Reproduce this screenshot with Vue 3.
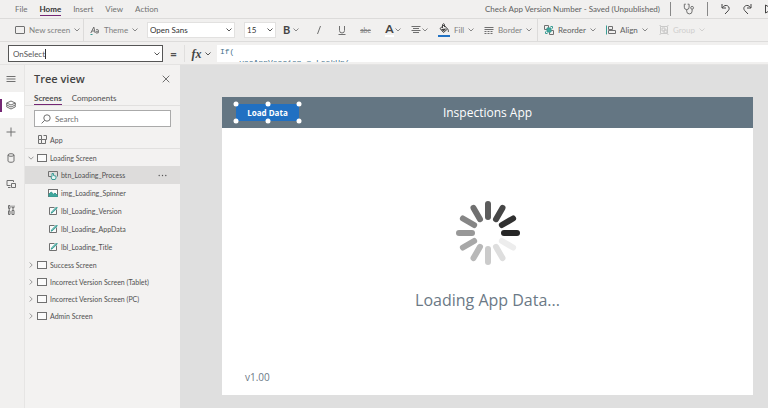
<script setup>
import { ref } from 'vue'

const menus = ['File', 'Home', 'Insert', 'View', 'Action']
const activeMenu = ref('Home')
const property = ref('OnSelect')
const font = ref('Open Sans')
const size = ref('15')
const search = ref('')
const selected = ref('btn_Loading_Process')
const formula = ref('If(\n    varAppVersion = LookUp(')

const controls = [
  { name: 'btn_Loading_Process', icon: 'button' },
  { name: 'img_Loading_Spinner', icon: 'image' },
  { name: 'lbl_Loading_Version', icon: 'label' },
  { name: 'lbl_Loading_AppData', icon: 'label' },
  { name: 'lbl_Loading_Title', icon: 'label' }
]
const otherScreens = [
  'Success Screen',
  'Incorrect Version Screen (Tablet)',
  'Incorrect Version Screen (PC)',
  'Admin Screen'
]
const spokes = [
  '#262626', '#ededed', '#dedede', '#cbcbcb', '#b8b8b8', '#a8a8a8',
  '#989898', '#868686', '#707070', '#5c5c5c', '#464646', '#303030'
]
const handles = ['tl', 'tc', 'tr', 'bl', 'bc', 'br']
</script>

<template>
  <div class="studio">
    <header class="titlebar">
      <nav class="menus" aria-label="Main menu">
        <button
          v-for="m in menus"
          :key="m"
          type="button"
          class="menu"
          :class="{ active: m === activeMenu }"
          @click="activeMenu = m"
        >{{ m }}</button>
      </nav>
      <span class="doc">Check App Version Number - Saved (Unpublished)</span>
      <div class="actions">
        <button type="button" class="act ruled" aria-label="App checker">
          <svg width="12" height="12" viewBox="0 0 12 12">
            <path d="M2.8 1.2H1.3v3a2.4 2.4 0 0 0 4.8 0v-3H4.6M3.7 6.6v1.6a2.7 2.7 0 0 0 5.4 0V6.2" />
            <circle cx="9.1" cy="4.8" r="1.4" />
          </svg>
        </button>
        <button type="button" class="act" aria-label="Undo">
          <svg width="11" height="12" viewBox="0 0 11 12">
            <path class="bold" d="M2 1v4h4M2.2 4.8C4 2.4 6 2 7.5 2.8c2.2 1.2 2 3.6.6 5L5 11" />
          </svg>
        </button>
        <button type="button" class="act" aria-label="Redo">
          <svg width="11" height="12" viewBox="0 0 11 12">
            <path class="bold" d="M9 1v4H5M8.8 4.8C7 2.4 5 2 3.5 2.8c-2.2 1.2-2 3.6-.6 5L6 11" />
          </svg>
        </button>
        <button type="button" class="act" aria-label="Preview">
          <svg width="10" height="12" viewBox="0 0 10 12"><path class="bold" d="M1.5 2v8l7-4z" /></svg>
        </button>
      </div>
    </header>

    <div class="toolbar" role="toolbar" aria-label="Formatting">
      <button type="button" class="tool first ruled">
        <svg width="10" height="10" viewBox="0 0 10 10"><rect x=".5" y="1.5" width="9" height="7" rx=".5" /></svg>
        <span>New screen</span>
        <svg class="chev" width="6" height="4" viewBox="0 0 6 4"><path d="M.5.5 3 3 5.5.5" /></svg>
      </button>
      <button type="button" class="tool">
        <svg width="10" height="10" viewBox="0 0 10 10">
          <path d="M.8 8 3.8 2l1.400 6M2 6h3" />
          <path d="M6 5c1-1 2.500-.5 2.500.5L8 8.200M8.300 6.200C6.500 6 5.700 6.800 6 7.600c.5.9 1.800.5 2.200-.2" />
          <path class="teal" d="M.5 9.500h2" />
        </svg>
        <span>Theme</span>
        <svg class="chev" width="6" height="4" viewBox="0 0 6 4"><path d="M.5.5 3 3 5.5.5" /></svg>
      </button>
      <div class="pick family">
        <select v-model="font" aria-label="Font"><option>Open Sans</option><option>Lato</option></select>
        <svg class="chev dark" width="6" height="4" viewBox="0 0 6 4"><path d="M.5.5 3 3 5.5.5" /></svg>
      </div>
      <div class="pick">
        <select v-model="size" aria-label="Font size"><option>15</option><option>18</option></select>
        <svg class="chev dark" width="6" height="4" viewBox="0 0 6 4"><path d="M.5.5 3 3 5.5.5" /></svg>
      </div>
      <button type="button" class="glyph" aria-label="Font weight">
        <b>B</b>
        <svg class="chev" width="6" height="4" viewBox="0 0 6 4"><path d="M.5.5 3 3 5.5.5" /></svg>
      </button>
      <button type="button" class="glyph" aria-label="Italic">
        <svg width="6" height="10" viewBox="0 0 6 10"><path d="M4.5 1 1.5 9" /></svg>
      </button>
      <button type="button" class="glyph" aria-label="Underline">
        <svg width="8" height="11" viewBox="0 0 8 11"><path d="M1.5 1v4.500a2.500 2.500 0 0 0 5 0V1M.5 9.500h7" /></svg>
      </button>
      <button type="button" class="glyph strike" aria-label="Strikethrough"><s>abc</s></button>
      <button type="button" class="glyph tight" aria-label="Font colour">
        <span class="fontcolor">A</span>
        <svg class="chev" width="6" height="4" viewBox="0 0 6 4"><path d="M.5.5 3 3 5.5.5" /></svg>
      </button>
      <button type="button" class="glyph tight" aria-label="Text alignment">
        <svg width="10" height="10" viewBox="0 0 10 10"><path d="M.5 1.500h9M2 3.500h6M.5 5.500h9M2 7.500h6" /></svg>
        <svg class="chev" width="6" height="4" viewBox="0 0 6 4"><path d="M.5.5 3 3 5.5.5" /></svg>
      </button>
      <button type="button" class="tool">
        <svg width="12" height="14" viewBox="0 0 12 14">
          <path class="bold" d="M2 5.500 6 2l3.500 4L5.500 9.500zM4.500 5V1.500c.8-1.300 2-.8 2 .2V4M9.500 6c1 .8 1 2 .8 3" />
          <path class="ink" d="m3 6 5.500-.5-3 3z" />
          <rect class="swatch" x="0" y="12" width="12" height="2" />
        </svg>
        <span>Fill</span>
        <svg class="chev" width="6" height="4" viewBox="0 0 6 4"><path d="M.5.5 3 3 5.5.5" /></svg>
      </button>
      <button type="button" class="tool ruled">
        <svg width="10" height="10" viewBox="0 0 10 10">
          <path d="M.5 2.500h9M.5 4.500h9" />
          <path stroke-dasharray="2 1" d="M.5 6.500h9M.5 8.500h9" />
        </svg>
        <span>Border</span>
        <svg class="chev" width="6" height="4" viewBox="0 0 6 4"><path d="M.5.5 3 3 5.5.5" /></svg>
      </button>
      <button type="button" class="tool strong">
        <svg width="10" height="10" viewBox="0 0 10 10">
          <path d="M.5.5h4v4h-4zM5.500 5.500h4v4h-4z" />
          <path class="tealfill" d="M3 3h4v4H3z" />
          <path class="teal" d="M6.500 1.500h2v2M1.500 6.500v2h2" />
        </svg>
        <span>Reorder</span>
        <svg class="chev" width="6" height="4" viewBox="0 0 6 4"><path d="M.5.5 3 3 5.5.5" /></svg>
      </button>
      <button type="button" class="tool strong">
        <svg width="10" height="10" viewBox="0 0 10 10">
          <path class="teal" d="M.5.5v9" />
          <path d="M2.500 1.500h4v3h-4zM2.500 5.500h7v3h-7z" />
        </svg>
        <span>Align</span>
        <svg class="chev" width="6" height="4" viewBox="0 0 6 4"><path d="M.5.5 3 3 5.5.5" /></svg>
      </button>
      <button type="button" class="tool" disabled>
        <svg width="10" height="10" viewBox="0 0 10 10">
          <path d="M1.500 1.500h7v7h-7zM3 3h3v3H3zM5 5h3v3H5zM.5.5h1v1M9.500.5h-1M.5 9.500h1M9.500 9.500h-1" />
        </svg>
        <span>Group</span>
        <svg class="chev" width="6" height="4" viewBox="0 0 6 4"><path d="M.5.5 3 3 5.5.5" /></svg>
      </button>
    </div>

    <div class="formulabar">
      <div class="property">
        <input v-model="property" aria-label="Property" />
        <span class="caret"></span>
        <button type="button" aria-label="Show properties">
          <svg class="chev dark" width="6" height="4" viewBox="0 0 6 4"><path d="M.5.5 3 3 5.5.5" /></svg>
        </button>
      </div>
      <span class="equals">=</span>
      <button type="button" class="fx" aria-label="Insert function">
        <i>fx</i>
        <svg class="chev dark" width="6" height="4" viewBox="0 0 6 4"><path d="M.5.5 3 3 5.5.5" /></svg>
      </button>
      <textarea v-model="formula" class="formula" aria-label="Formula" spellcheck="false" wrap="off"></textarea>
    </div>

    <div class="workspace">
      <nav class="rail" aria-label="Panels">
        <button type="button" aria-label="Expand">
          <svg width="10" height="10" viewBox="0 0 10 10"><path d="M.5 2.500h9M.5 5h9M.5 7.500h9" /></svg>
        </button>
        <button type="button" class="on" aria-label="Tree view">
          <svg width="10" height="10" viewBox="0 0 10 10"><path d="M5 1 9.300 3 5 5 .7 3zM.7 3v2L5 7l4.300-2V3M.7 5.200v1.700L5 9l4.300-2.100V5.200" /></svg>
        </button>
        <button type="button" aria-label="Insert">
          <svg width="10" height="10" viewBox="0 0 10 10"><path d="M5 .5v9M.5 5h9" /></svg>
        </button>
        <button type="button" aria-label="Data">
          <svg width="10" height="10" viewBox="0 0 10 10">
            <ellipse cx="5" cy="2" rx="3" ry="1.300" /><path d="M2 2v6c0 1.700 6 1.700 6 0V2" />
          </svg>
        </button>
        <button type="button" aria-label="Media">
          <svg width="11" height="10" viewBox="0 0 11 10">
            <path d="M4.500 6.500H1v-5h6.500V3M5.500 4.500h4v4h-4zM2 8.500h2.500" />
          </svg>
        </button>
        <button type="button" aria-label="Advanced tools">
          <svg width="8" height="10" viewBox="0 0 8 10">
            <path d="M1.500.5H3v3H1.500zM2.200 3.500V6M1.500 6H3v3.500H1.500zM5 .5v2.200h2V.5M6 2.700V5.500M5 5.500h2v4H5z" />
          </svg>
        </button>
      </nav>

      <aside class="panel">
        <div class="head">
          <h1>Tree view</h1>
          <button type="button" aria-label="Close">
            <svg width="8" height="8" viewBox="0 0 8 8"><path d="m.7.7 6.600 6.600M7.300.7.7 7.300" /></svg>
          </button>
        </div>
        <div class="tabs" role="tablist">
          <button type="button" role="tab" aria-selected="true" class="current">Screens</button>
          <button type="button" role="tab" aria-selected="false">Components</button>
        </div>
        <label class="search">
          <svg width="10" height="10" viewBox="0 0 10 10"><circle cx="6" cy="4" r="3.200" /><path d="M3.700 6.300.6 9.400" /></svg>
          <input v-model="search" type="search" placeholder="Search" aria-label="Search" />
        </label>
        <button type="button" class="row app">
          <svg width="10" height="10" viewBox="0 0 10 10"><path d="M4.500.5h-3v4h3zM6.500.5h3v4h-3M1.500 4.500v4h3v-4M4.500 8.500h4v-4h-4" /></svg>
          <span>App</span>
        </button>
        <ul class="tree">
          <li>
            <button type="button" class="row">
              <svg class="twist" width="6" height="6" viewBox="0 0 6 6"><path d="M.5 1.700 3 4.200l2.500-2.500" /></svg>
              <svg width="10" height="8" viewBox="0 0 10 8"><rect class="paper" x=".5" y=".5" width="9" height="7" /></svg>
              <span>Loading Screen</span>
            </button>
            <ul>
              <li v-for="c in controls" :key="c.name" class="child" :class="{ selected: c.name === selected }">
                <button type="button" class="row" @click="selected = c.name">
                  <svg v-if="c.icon === 'button'" width="10" height="10" viewBox="0 0 10 10">
                    <path d="M3 6.500H.5v-5h9v5" />
                    <path class="tealpaper" d="M4 9.500 3 7l1-.5V3.500h1.500V5.500l2.500.7V8l-.8 1.500z" />
                  </svg>
                  <svg v-else-if="c.icon === 'image'" width="10" height="10" viewBox="0 0 10 10">
                    <rect class="paper" x=".5" y="1.500" width="9" height="7" />
                    <path class="tealfill" d="M1 8.500V6l2.300-2 2.200 2.300L7 5l2.500 2.500v1z" />
                  </svg>
                  <svg v-else width="10" height="10" viewBox="0 0 10 10">
                    <path class="paper" d="M8.500 3.500v5h-7v-7h5" />
                    <path class="teal wide" d="M3 7.200 4 5.500 8.500 1l.8.8L4.800 6.400z" />
                  </svg>
                  <span>{{ c.name }}</span>
                </button>
                <button v-if="c.name === selected" type="button" class="more" aria-label="More">
                  <svg width="9" height="3" viewBox="0 0 9 3">
                    <circle cx="1.200" cy="1.500" r=".7" /><circle cx="4.500" cy="1.500" r=".7" /><circle cx="7.800" cy="1.500" r=".7" />
                  </svg>
                </button>
              </li>
            </ul>
          </li>
          <li v-for="s in otherScreens" :key="s">
            <button type="button" class="row">
              <svg class="twist" width="6" height="6" viewBox="0 0 6 6"><path d="M1.700.5 4.200 3 1.700 5.500" /></svg>
              <svg width="10" height="8" viewBox="0 0 10 8"><rect class="paper" x=".5" y=".5" width="9" height="7" /></svg>
              <span>{{ s }}</span>
            </button>
          </li>
        </ul>
      </aside>

      <main class="canvas">
        <section class="screen">
          <div class="appbar">
            <div class="selection">
              <button type="button" class="load">Load Data</button>
              <span v-for="h in handles" :key="h" class="handle" :class="h"></span>
            </div>
            <h2>Inspections App</h2>
          </div>
          <div class="content">
            <svg class="spinner" width="64" height="64" viewBox="-32 -32 64 64">
              <line
                v-for="(c, i) in spokes"
                :key="i"
                x1="16" y1="0" x2="29" y2="0"
                :stroke="c"
                :transform="`rotate(${i * 30})`"
              />
            </svg>
            <p class="status">Loading App Data...</p>
            <p class="version">v1.00</p>
          </div>
        </section>
      </main>
    </div>
  </div>
</template>

<style>
body {
  margin: 0;
  background: #f1f0ef;
}
</style>

<style scoped>
.studio {
  display: flex;
  flex-direction: column;
  min-height: 100vh;
  overflow: hidden;
  font: 8px/12px "Segoe UI", Lato, "Noto Sans", sans-serif;
  color: #505050;
  background: #f1f0ef;
}
.studio * {
  box-sizing: border-box;
}
button,
input,
select,
textarea {
  margin: 0;
  padding: 0;
  border: 0;
  border-radius: 0;
  outline: 0;
  background: none;
  font: inherit;
  color: inherit;
}
ul {
  margin: 0;
  padding: 0;
  list-style: none;
}
h1,
h2,
p {
  margin: 0;
}
svg {
  flex: none;
  display: block;
  fill: none;
  stroke: #707070;
  stroke-width: 1;
}
.chev {
  stroke: #888;
}
.chev.dark {
  stroke: #555;
}
.bold {
  stroke: #444;
}
.teal {
  stroke: #3a9c94;
}
.wide {
  fill: #8fd0ca;
}
.tealfill {
  fill: #3fa79c;
  stroke: #3a9c94;
}
.tealpaper {
  fill: #e6f4f3;
  stroke: #3a9c94;
}
.paper {
  fill: #fbfbfb;
}
.ink {
  fill: #444;
  stroke: none;
}
.swatch {
  fill: #2272c3;
  stroke: none;
}

.titlebar {
  display: flex;
  align-items: stretch;
  height: 19px;
  border-bottom: 1px solid #dcdbda;
}
.menus {
  display: flex;
  gap: 12px;
  padding: 4px 0 2px 15px;
  color: #707070;
}
.menu {
  border-bottom: 1px solid transparent;
  line-height: 11px;
}
.menu.active {
  font-weight: 700;
  color: #333;
  border-bottom-color: #742774;
}
.doc {
  margin-left: auto;
  padding-right: 10px;
  line-height: 18px;
  color: #606060;
}
.actions {
  display: flex;
  align-items: center;
  gap: 11px;
  margin-right: -6px;
}
.act.ruled {
  padding: 1px 12px;
  margin-right: 1px;
  border: solid #888;
  border-width: 0 1px;
}

.toolbar {
  display: grid;
  grid-template-columns: 84px 63px 97px 32px 30px 26px 20px 27px 28px 25px 46px 60px 62px 53px 60px;
  align-items: center;
  height: 23px;
  border-bottom: 1px solid #dddcdb;
  color: #808080;
}
.tool {
  display: flex;
  align-items: center;
  gap: 4px;
  height: 22px;
  padding-left: 6px;
}
.tool.first {
  padding-left: 15px;
}
.tool.ruled {
  border-right: 1px solid #dcdbda;
}
.tool.strong {
  color: #606060;
}
.tool:disabled {
  opacity: 0.3;
}
.pick {
  display: grid;
  align-items: center;
  height: 16px;
  background: #fff;
  border: 1px solid #e2e1e0;
  color: #333;
}
.pick.family {
  margin-right: 9px;
}
.pick > * {
  grid-area: 1 / 1;
}
.pick select {
  appearance: none;
  width: 100%;
  height: 14px;
  padding-left: 2px;
}
.pick .chev {
  justify-self: end;
  margin-right: 2px;
  pointer-events: none;
}
.glyph {
  display: flex;
  align-items: center;
  justify-content: center;
  gap: 3px;
  height: 22px;
}
.glyph b {
  font-size: 11px;
  color: #444;
}
.glyph.tight {
  gap: 1px;
}
.strike {
  font-size: 7px;
}
.fontcolor {
  font-size: 12px;
  font-weight: 700;
  color: #444;
  border-bottom: 2px solid #fff;
}

.formulabar {
  display: flex;
  align-items: stretch;
  height: 23px;
  padding: 3px 0 2px 8px;
  border-bottom: 1px solid #e4e3e2;
}
.property {
  display: flex;
  align-items: center;
  width: 155px;
  padding: 0 2px 0 4px;
  background: #fff;
  border: 1px solid #555;
  color: #555;
}
.property input {
  field-sizing: content;
}
.caret {
  width: 1px;
  height: 10px;
  background: #333;
}
.property button {
  margin-left: auto;
}
.equals {
  width: 21px;
  text-align: center;
  font-size: 12px;
  font-weight: 700;
  line-height: 18px;
}
.fx {
  display: flex;
  align-items: center;
  justify-content: center;
  gap: 3px;
  width: 33px;
  border-left: 1px solid #e0dfde;
}
.fx i {
  font: italic bold 12px/14px "Liberation Serif", serif;
  color: #444;
}
.formula {
  flex: 1;
  height: 17px;
  padding: 1px 3px 0;
  resize: none;
  overflow: hidden;
  background: #fff;
  font: 8px/11px "Liberation Mono", monospace;
  color: #3f6f8a;
}

.workspace {
  display: flex;
  flex: 1;
}
.rail {
  display: flex;
  flex-direction: column;
  width: 25px;
  padding-top: 1px;
  border-right: 1px solid #e6e5e4;
}
.rail button {
  display: flex;
  align-items: center;
  justify-content: center;
  height: 26px;
  padding-right: 2px;
}
.rail .on {
  margin-bottom: 1px;
  background: linear-gradient(#742774, #742774) 0 50% / 2px 13px no-repeat #fff;
}

.panel {
  width: 155px;
  background: #f3f2f1;
}
.head {
  display: flex;
  align-items: center;
  justify-content: space-between;
  padding: 6px 10px 5px 9px;
}
.head h1 {
  font: 600 11px/16px "Segoe UI", "Open Sans", sans-serif;
  color: #444;
}
.tabs {
  display: flex;
  gap: 10px;
  padding-left: 9px;
  border-bottom: 1px solid #e1e0df;
}
.tabs button {
  height: 13px;
  border-bottom: 1px solid transparent;
}
.tabs .current {
  font-weight: 700;
  border-bottom-color: #742774;
}
.search {
  display: flex;
  align-items: center;
  gap: 4px;
  height: 17px;
  margin: 4px 9px;
  padding-left: 6px;
  background: #fff;
  border: 1px solid #aaa;
}
.search input {
  flex: 1;
  min-width: 0;
  appearance: none;
}
.search input::placeholder {
  color: #707070;
  opacity: 1;
}
.row {
  display: flex;
  align-items: center;
  gap: 3px;
  width: 100%;
  height: 17px;
  font-size: 7px;
  white-space: nowrap;
  text-align: left;
}
.row.app {
  padding-left: 12px;
}
.tree {
  border-top: 1px solid #e1e0df;
}
.tree .row {
  padding-left: 3px;
}
.tree .twist {
  stroke: #999;
}
.child {
  display: flex;
  align-items: center;
}
.tree .child .row {
  height: 18px;
  padding-left: 23px;
}
.child.selected {
  background: #dddcdb;
}
.more {
  margin-right: 13px;
}
.more svg {
  fill: #555;
  stroke: none;
}

.canvas {
  display: flex;
  flex: 1;
  padding: 32px 15px 13px 42px;
  background: #dfdfdf;
  font-family: "Open Sans", "Noto Sans", sans-serif;
}
.screen {
  display: flex;
  flex-direction: column;
  flex: 1;
  background: #fff;
}
.appbar {
  display: grid;
  grid-template-columns: 1fr auto 1fr;
  align-items: center;
  height: 31px;
  padding: 0 14px;
  background: #647683;
}
.appbar h2 {
  font-size: 12px;
  line-height: 16px;
  font-weight: 400;
  color: #fff;
}
.selection {
  position: relative;
  width: 63px;
}
.load {
  display: block;
  width: 100%;
  height: 17px;
  background: #2170c2;
  font-weight: 700;
  color: #fff;
}
.handle {
  position: absolute;
  width: 5px;
  height: 5px;
  border-radius: 50%;
  background: #fff;
  transform: translate(-50%, -50%);
}
.tl { left: 0; top: 0; }
.tc { left: 50%; top: 0; }
.tr { left: 100%; top: 0; }
.bl { left: 0; top: 100%; }
.bc { left: 50%; top: 100%; }
.br { left: 100%; top: 100%; }
.content {
  display: flex;
  flex-direction: column;
  align-items: center;
  flex: 1;
  padding: 73px 23px 10px;
  color: #6b7986;
}
.spinner {
  stroke-width: 6;
  stroke-linecap: round;
}
.status {
  margin-top: 24px;
  font-size: 16px;
  line-height: 22px;
}
.version {
  align-self: flex-start;
  margin-top: auto;
  font-size: 10px;
  line-height: 16px;
}
</style>
